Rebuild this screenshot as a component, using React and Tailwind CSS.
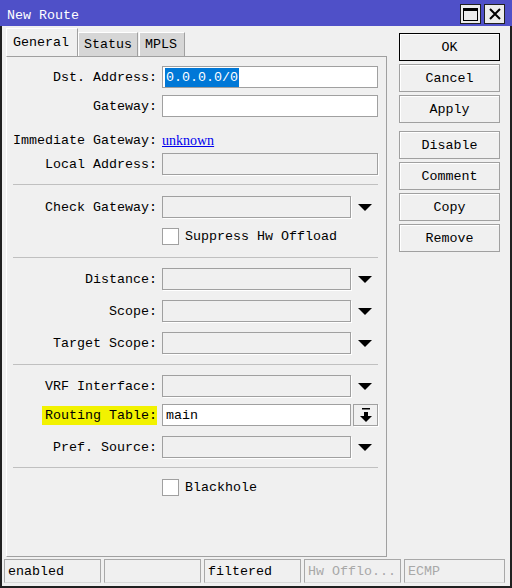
import React from "react";

function Row({ label, mt = "", highlight, children }) {
  return (
    <div className={`flex h-[22px] items-center ${mt}`}>
      <div className="w-[150px] shrink-0 text-right whitespace-pre">
        {highlight ? (
          <span className="bg-[#f2f200] py-[2px] pl-[3px]">{label}</span>
        ) : (
          label
        )}
      </div>
      <div className="ml-[5px] flex items-center">{children}</div>
    </div>
  );
}

function GrayInput({ w = "w-[216px]" }) {
  return (
    <div className={`h-[22px] ${w} border border-[#a0a0a0] bg-[#f0f0f0] shadow-[1px_1px_0_#fff]`} />
  );
}

function Arrow() {
  return (
    <div className="flex w-[27px] justify-center">
      <svg width="14" height="7" viewBox="0 0 14 7">
        <polygon points="0,0 14,0 7,7" fill="#000" />
      </svg>
    </div>
  );
}

function Separator({ mt }) {
  return <div className={`ml-[6px] h-px w-[365px] bg-[#c0c0c0] ${mt}`} />;
}

function Checkbox({ label, mt }) {
  return (
    <div className={`flex h-[22px] items-center ${mt}`}>
      <div className="ml-[155px] h-[17px] w-[17px] border border-[#a0a0a0] bg-white" />
      <span className="ml-[6px]">{label}</span>
    </div>
  );
}

function Btn({ children, primary, mt = "mt-[3px]" }) {
  return (
    <div
      className={`flex h-[28px] w-[101px] items-center justify-center border bg-[#f0f0f0] shadow-[inset_1px_1px_0_#fff] ${
        primary ? "border-black" : "border-[#a0a0a0]"
      } ${mt}`}
    >
      {children}
    </div>
  );
}

function StatusCell({ children, w = "w-[97px]", gray }) {
  return (
    <div
      className={`flex h-[24px] ${w} items-center border border-[#a8a8a8] border-b-[#d8d8d8] pl-[3px] ${
        gray ? "text-[#a8a8a8]" : "text-black"
      }`}
    >
      {children}
    </div>
  );
}

export default function App() {
  return (
    <div className="flex h-[588px] w-[512px] flex-col bg-[#f0f0f0] font-['Liberation_Mono',monospace] text-[13.33px] leading-[17px] text-black">
      {/* Title bar */}
      <div className="flex h-[26px] shrink-0 items-end bg-[#4f50c8] pb-[2px] pl-[7px] pr-[7px]">
        <span className="text-white">New Route</span>
        <div className="ml-auto flex gap-[3px]">
          <div className="flex h-[20px] w-[21px] items-center justify-center border border-[#202020] bg-[#ececec]">
            <svg width="15" height="13" viewBox="0 0 15 13">
              <rect x="0.5" y="0.5" width="14" height="12" fill="none" stroke="#000" />
              <rect x="0" y="0" width="15" height="3" fill="#000" />
            </svg>
          </div>
          <div className="flex h-[20px] w-[21px] items-center justify-center border border-[#202020] bg-[#ececec]">
            <svg width="12" height="12" viewBox="0 0 12 12">
              <path d="M1 1 L11 11 M11 1 L1 11" stroke="#000" strokeWidth="2" />
            </svg>
          </div>
        </div>
      </div>

      {/* Body */}
      <div className="flex flex-1 flex-col border-x-2 border-b-2 border-[#202020]">
        <div className="flex">
          {/* Left: tabs + panel */}
          <div className="ml-[4px] mt-[2px] w-[381px]">
            <div className="flex h-[28px] items-end">
              <div className="flex h-[28px] w-[72px] items-center border-l border-t border-r border-white border-r-[#a0a0a0] bg-[#f0f0f0] pl-[6px]">
                General
              </div>
              <div className="flex h-[24px] w-[60px] items-center border-l border-t border-r border-white border-r-[#a0a0a0] bg-[#d6d6d6] pl-[5px]">
                Status
              </div>
              <div className="ml-px flex h-[24px] w-[46px] items-center border-l border-t border-r border-white border-r-[#a0a0a0] bg-[#d6d6d6] pl-[5px]">
                MPLS
              </div>
            </div>
            <div className="h-[501px] border-t border-r border-b border-[#a0a0a0] border-l border-l-white">
              <Row label="Dst. Address:" mt="mt-[9px]">
                <div className="flex h-[22px] w-[216px] items-center border border-[#a0a0a0] bg-white pl-[2px]">
                  <span className="bg-[#0078d7] px-px leading-[19px] text-white">0.0.0.0/0</span>
                </div>
              </Row>
              <Row label="Gateway:" mt="mt-[7px]">
                <div className="h-[22px] w-[216px] border border-[#a0a0a0] bg-white" />
              </Row>
              <Row label="Immediate Gateway:" mt="mt-[12px]">
                <span className="font-['Liberation_Serif',serif] text-[14px] text-[#0000ee] underline">
                  unknown
                </span>
              </Row>
              <Row label="Local Address:" mt="mt-[2px]">
                <GrayInput />
              </Row>
              <Separator mt="mt-[9px]" />
              <Row label="Check Gateway:" mt="mt-[11px]">
                <GrayInput w="w-[189px]" />
                <Arrow />
              </Row>
              <Checkbox label="Suppress Hw Offload" mt="mt-[7px]" />
              <Separator mt="mt-[10px]" />
              <Row label="Distance:" mt="mt-[10px]">
                <GrayInput w="w-[189px]" />
                <Arrow />
              </Row>
              <Row label="Scope:" mt="mt-[10px]">
                <GrayInput w="w-[189px]" />
                <Arrow />
              </Row>
              <Row label="Target Scope:" mt="mt-[10px]">
                <GrayInput w="w-[189px]" />
                <Arrow />
              </Row>
              <Separator mt="mt-[10px]" />
              <Row label="VRF Interface:" mt="mt-[10px]">
                <GrayInput w="w-[189px]" />
                <Arrow />
              </Row>
              <Row label="Routing Table:" mt="mt-[7px]" highlight>
                <div className="flex h-[22px] w-[189px] items-center border border-[#a0a0a0] bg-white pl-[3px]">
                  main
                </div>
                <div className="ml-[2px] flex h-[22px] w-[25px] items-center justify-center border border-[#a0a0a0] bg-[#f0f0f0] shadow-[1px_1px_0_#fff]">
                  <svg width="12" height="14" viewBox="0 0 12 14">
                    <rect x="2" y="0" width="8" height="1.5" fill="#000" />
                    <rect x="4" y="4" width="4" height="5" fill="#000" />
                    <polygon points="0,8 12,8 6,14" fill="#000" />
                  </svg>
                </div>
              </Row>
              <Row label="Pref. Source:" mt="mt-[10px]">
                <GrayInput w="w-[189px]" />
                <Arrow />
              </Row>
              <Separator mt="mt-[9px]" />
              <Checkbox label="Blackhole" mt="mt-[8px]" />
            </div>
          </div>

          {/* Right: buttons */}
          <div className="ml-[12px] mt-[7px] flex flex-col">
            <Btn primary mt="">OK</Btn>
            <Btn>Cancel</Btn>
            <Btn>Apply</Btn>
            <Btn mt="mt-[8px]">Disable</Btn>
            <Btn>Comment</Btn>
            <Btn>Copy</Btn>
            <Btn>Remove</Btn>
          </div>
        </div>

        {/* Status bar */}
        <div className="ml-[2px] mt-[2px] flex gap-[3px]">
          <StatusCell>enabled</StatusCell>
          <StatusCell />
          <StatusCell>filtered</StatusCell>
          <StatusCell gray>Hw Offlo...</StatusCell>
          <StatusCell gray w="w-[101px]">ECMP</StatusCell>
        </div>
      </div>
    </div>
  );
}
